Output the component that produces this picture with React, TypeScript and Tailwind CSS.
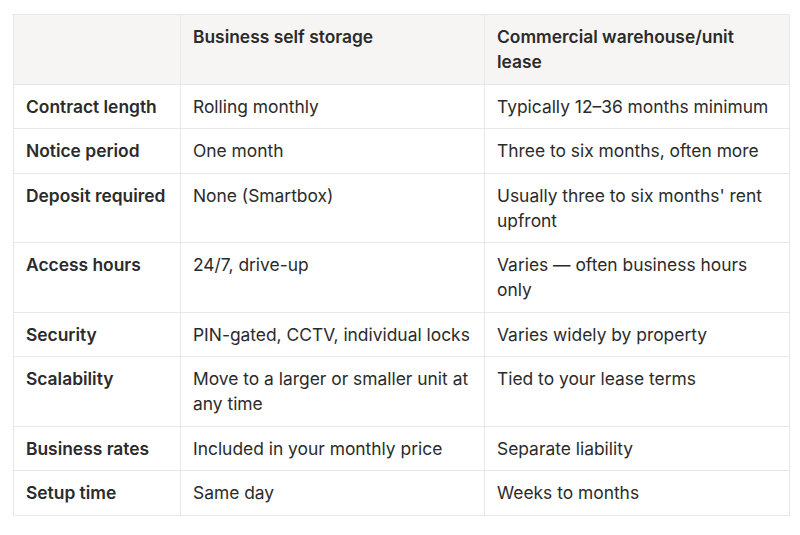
const rows: [string, string, string][] = [
  ['Contract length', 'Rolling monthly', 'Typically 12–36 months minimum'],
  ['Notice period', 'One month', 'Three to six months, often more'],
  ['Deposit required', 'None (Smartbox)', "Usually three to six months' rent upfront"],
  ['Access hours', '24/7, drive-up', 'Varies — often business hours only'],
  ['Security', 'PIN-gated, CCTV, individual locks', 'Varies widely by property'],
  ['Scalability', 'Move to a larger or smaller unit at any time', 'Tied to your lease terms'],
  ['Business rates', 'Included in your monthly price', 'Separate liability'],
  ['Setup time', 'Same day', 'Weeks to months'],
];

export default function App() {
  return (
    <div className="w-[800px] h-[535px] bg-white pt-[14px] pl-[13px] font-['Inter',sans-serif] text-[#2b2b2b]">
      <table className="w-[776px] table-fixed border-collapse text-[17.4px] leading-[25px]">
        <colgroup>
          <col className="w-[167px]" />
          <col className="w-[304px]" />
          <col className="w-[305px]" />
        </colgroup>
        <thead>
          <tr className="bg-[#f6f5f3]">
            <th className="border border-[#e8e8e8] px-3 py-[9.25px] text-left align-top font-semibold"></th>
            <th className="border border-[#e8e8e8] px-3 py-[9.25px] text-left align-top font-semibold">Business self storage</th>
            <th className="border border-[#e8e8e8] px-3 py-[9.25px] text-left align-top font-semibold">Commercial warehouse/unit lease</th>
          </tr>
        </thead>
        <tbody>
          {rows.map(([label, a, b]) => (
            <tr key={label}>
              <td className="border border-[#e8e8e8] px-3 py-[9.25px] align-top font-semibold">{label}</td>
              <td className="border border-[#e8e8e8] px-3 py-[9.25px] align-top">{a}</td>
              <td className="border border-[#e8e8e8] px-3 py-[9.25px] align-top">{b}</td>
            </tr>
          ))}
        </tbody>
      </table>
    </div>
  );
}
